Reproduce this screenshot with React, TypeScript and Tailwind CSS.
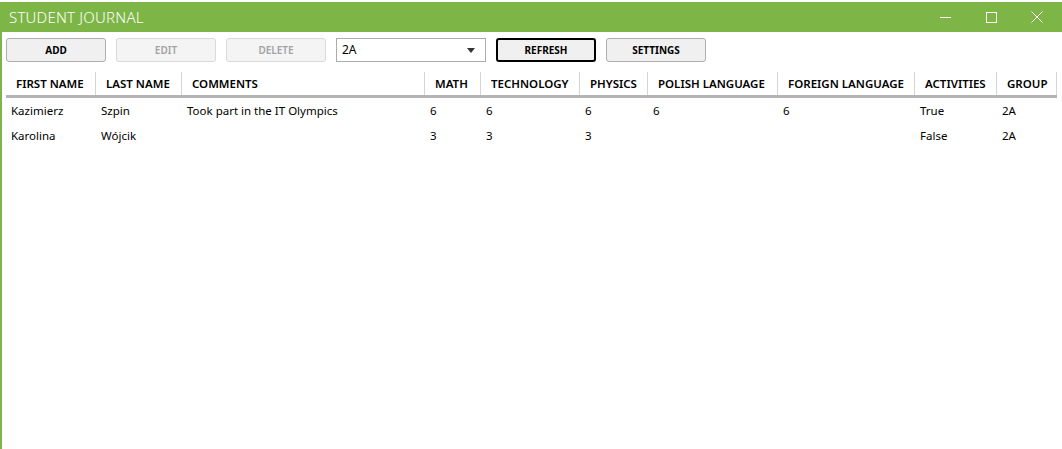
import React from "react";

const font = { fontFamily: '"Noto Sans", "Open Sans", sans-serif' };

const columns = [
  { key: "first", label: "FIRST NAME", w: "w-[90px]" },
  { key: "last", label: "LAST NAME", w: "w-[86px]" },
  { key: "comments", label: "COMMENTS", w: "w-[243px]" },
  { key: "math", label: "MATH", w: "w-[56px]" },
  { key: "tech", label: "TECHNOLOGY", w: "w-[99px]" },
  { key: "physics", label: "PHYSICS", w: "w-[68px]" },
  { key: "polish", label: "POLISH LANGUAGE", w: "w-[130px]" },
  { key: "foreign", label: "FOREIGN LANGUAGE", w: "w-[137px]" },
  { key: "activities", label: "ACTIVITIES", w: "w-[82px]" },
  { key: "group", label: "GROUP", w: "w-[60px]" },
];

const rows: Record<string, string>[] = [
  {
    first: "Kazimierz",
    last: "Szpin",
    comments: "Took part in the IT Olympics",
    math: "6",
    tech: "6",
    physics: "6",
    polish: "6",
    foreign: "6",
    activities: "True",
    group: "2A",
  },
  {
    first: "Karolina",
    last: "Wójcik",
    comments: "",
    math: "3",
    tech: "3",
    physics: "3",
    polish: "",
    foreign: "",
    activities: "False",
    group: "2A",
  },
];

function ToolButton({
  label,
  disabled,
  focused,
}: {
  label: string;
  disabled?: boolean;
  focused?: boolean;
}) {
  const cls = disabled
    ? "border border-[#d9d9d9] bg-[#f4f4f4] text-[#a3a3a3] font-semibold"
    : focused
    ? "border-2 border-black bg-[#f0f0f0] text-black font-bold"
    : "border border-[#adadad] bg-[#f0f0f0] text-black font-bold";
  return (
    <div
      className={`w-[100px] h-[24px] rounded-[3px] flex items-center justify-center text-[10px] ${cls}`}
    >
      {label}
    </div>
  );
}

export default function App() {
  return (
    <div className="w-[1062px] h-[449px] bg-white overflow-hidden flex flex-col" style={font}>
      {/* stray strip above the window */}
      <div className="h-[2px] bg-white shrink-0" />

      <div className="flex-1 flex flex-col border-l-2 border-[#7db646]">
        {/* Title bar */}
        <div className="h-[30px] bg-[#7db646] flex items-center justify-between shrink-0 -ml-[2px]">
          <span className="pl-[9px] text-[15px] font-light text-white tracking-[0.2px]">
            STUDENT JOURNAL
          </span>
          <div className="flex items-center h-full">
            <div className="w-[46px] h-full flex items-center justify-center">
              <svg width="11" height="11" viewBox="0 0 11 11">
                <line x1="0" y1="5.5" x2="11" y2="5.5" stroke="white" strokeWidth="1" />
              </svg>
            </div>
            <div className="w-[46px] h-full flex items-center justify-center">
              <svg width="11" height="11" viewBox="0 0 11 11">
                <rect x="0.5" y="0.5" width="10" height="10" fill="none" stroke="white" strokeWidth="1" />
              </svg>
            </div>
            <div className="w-[46px] h-full flex items-center justify-center mr-[2px]">
              <svg width="12" height="12" viewBox="0 0 12 12">
                <path d="M0.5 0.5 L11.5 11.5 M11.5 0.5 L0.5 11.5" stroke="white" strokeWidth="1" />
              </svg>
            </div>
          </div>
        </div>

        {/* Toolbar */}
        <div className="flex items-center gap-[10px] pl-[4px] pt-[6px] shrink-0">
          <ToolButton label="ADD" />
          <ToolButton label="EDIT" disabled />
          <ToolButton label="DELETE" disabled />
          <div className="w-[150px] h-[24px] border border-[#acacac] bg-white flex items-center justify-between px-[5px]">
            <span className="text-[12px] text-black">2A</span>
            <svg width="8" height="5" viewBox="0 0 8 5" className="mr-[5px]">
              <path d="M0 0 L8 0 L4 5 Z" fill="#333" />
            </svg>
          </div>
          <ToolButton label="REFRESH" focused />
          <ToolButton label="SETTINGS" />
        </div>

        {/* Grid */}
        <div className="pl-[4px] pt-[10px]">
          <div className="flex h-[26px] border-b-[3px] border-[#b4b4b4] w-[1051px]">
            {columns.map((c) => (
              <div
                key={c.key}
                className={`${c.w} shrink-0 flex items-center pl-[10px] border-r border-[#d5d5d5] text-[11.5px] font-semibold text-black whitespace-nowrap`}
              >
                {c.label}
              </div>
            ))}
          </div>
          {rows.map((r, i) => (
            <div key={i} className="flex h-[25px] w-[1051px]">
              {columns.map((c) => (
                <div
                  key={c.key}
                  className={`${c.w} shrink-0 flex items-center pl-[5px] text-[11.5px] text-black whitespace-nowrap`}
                >
                  {r[c.key]}
                </div>
              ))}
            </div>
          ))}
        </div>
      </div>
    </div>
  );
}
